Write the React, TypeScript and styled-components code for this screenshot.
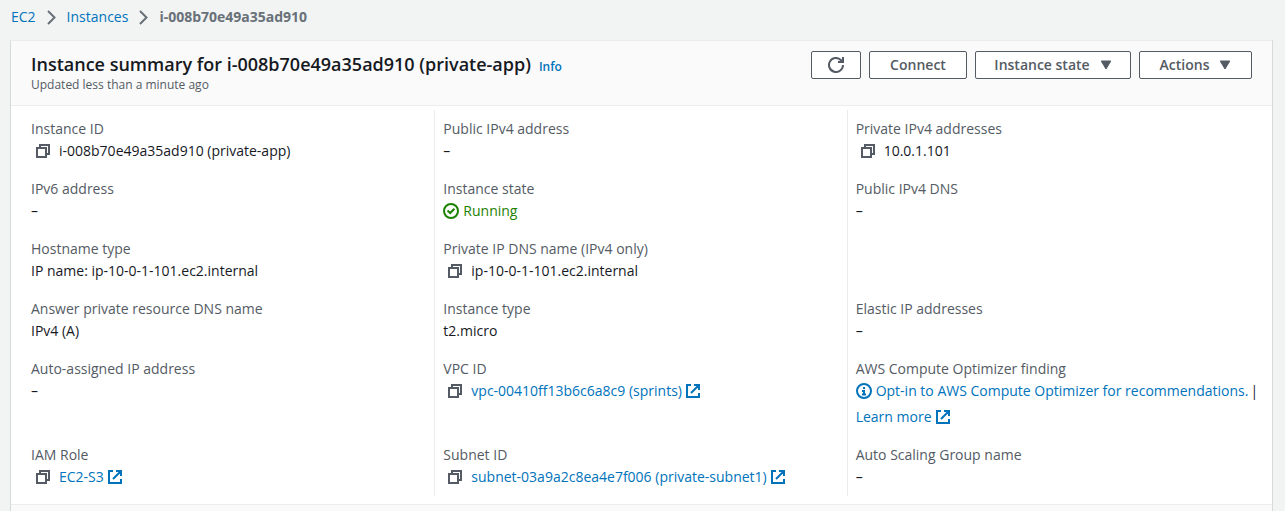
import React from "react";
import styled, { createGlobalStyle } from "styled-components";

const colors = {
  page: "#f2f3f3",
  header: "#fafafa",
  line: "#eaeded",
  text: "#16191f",
  muted: "#545b64",
  faded: "#687078",
  link: "#0073bb",
  ok: "#1d8102",
};

const GlobalStyle = createGlobalStyle`
  * { box-sizing: border-box; }
  body {
    margin: 0;
    background: ${colors.page};
    color: ${colors.text};
    font: 14px/22px "Open Sans", "Noto Sans", sans-serif;
  }
`;

const Page = styled.div`
  display: flex;
  flex-direction: column;
  min-height: 100vh;
  padding: 6px 12px 0 10px;
`;

const Crumbs = styled.ol`
  display: flex;
  align-items: center;
  gap: 11px;
  height: 22px;
  margin: 0 0 12px;
  padding: 0 0 0 1px;
  list-style: none;
`;

const Crumb = styled.li<{ $current?: boolean }>`
  display: flex;
  align-items: center;
  gap: 11px;
  color: ${colors.faded};
  font-weight: ${(p) => (p.$current ? 700 : 400)};
`;

const Link = styled.a`
  color: ${colors.link};
  text-decoration: none;
  &:hover { text-decoration: underline; }
`;

const Card = styled.main`
  display: flex;
  flex-direction: column;
  flex: 1;
  background: #fff;
  border: 1px solid #d5dbdb;
  border-top-color: ${colors.line};
  border-bottom: 0;
`;

const CardHeader = styled.header`
  display: flex;
  justify-content: space-between;
  align-items: flex-start;
  padding: 10px 20px 12px;
  background: ${colors.header};
  border-bottom: 1px solid ${colors.line};
`;

const Heading = styled.div`
  display: flex;
  align-items: baseline;
  gap: 8px;
`;

const Title = styled.h1`
  margin: 0;
  font-size: 18px;
  line-height: 26px;
  font-weight: 600;
`;

const InfoLink = styled(Link)`
  font-size: 12px;
  line-height: 16px;
  font-weight: 600;
`;

const Updated = styled.p`
  margin: 0;
  color: ${colors.muted};
  font-size: 12px;
  line-height: 16px;
`;

const Actions = styled.div`
  display: flex;
  gap: 8px;
`;

const Button = styled.button<{ $width: number }>`
  display: flex;
  align-items: center;
  justify-content: center;
  gap: 10px;
  width: ${(p) => p.$width}px;
  height: 28px;
  padding: 0;
  border: 1px solid ${colors.muted};
  border-radius: 2px;
  background: #fff;
  color: ${colors.muted};
  font: inherit;
  font-weight: 600;
  white-space: nowrap;
  cursor: pointer;
`;

const Details = styled.dl`
  display: grid;
  grid-template-columns: repeat(3, minmax(0, 1fr));
  margin: 0;
  padding: 4px 13px 8px 11px;
`;

const Cell = styled.div<{ $first?: boolean }>`
  padding: 8px 0 8px 8px;
  border-left: 1px solid ${(p) => (p.$first ? "transparent" : colors.line)};
`;

const Label = styled.dt`
  color: ${colors.muted};
`;

const Value = styled.dd`
  display: flex;
  flex-wrap: wrap;
  align-items: center;
  gap: 4px;
  margin: 0;
`;

const CopyButton = styled.button`
  display: flex;
  margin: 0 5px;
  padding: 0;
  border: 0;
  background: none;
  color: ${colors.muted};
  cursor: pointer;
`;

const Status = styled.span`
  display: flex;
  align-items: center;
  gap: 4px;
  color: ${colors.ok};
`;

const IconLink = styled(Link)`
  display: flex;
  align-items: center;
  gap: 4px;
`;

const OptIn = styled.span`
  display: flex;
  gap: 2px;
  white-space: nowrap;
`;

const Footer = styled.footer`
  flex: 1;
  background: ${colors.header};
  border-top: 1px solid ${colors.line};
`;

const ChevronIcon = () => (
  <svg width="9" height="15" viewBox="0 0 9 15" fill="none" stroke="#687078" strokeWidth="2" aria-hidden>
    <path d="M1 1l6.5 6.5L1 14" />
  </svg>
);

const RefreshIcon = () => (
  <svg width="16" height="16" viewBox="0 0 16 16" fill="none" stroke="currentColor" strokeWidth="2" aria-hidden>
    <path d="M15 8a7 7 0 1 1-2.2-5.1L15 5" />
    <path d="M10 5h5V0" />
  </svg>
);

const CaretIcon = () => (
  <svg width="12" height="10" viewBox="0 0 12 10" fill="currentColor" aria-hidden>
    <path d="M1.2 1h9.6L6 9z" stroke="currentColor" strokeLinejoin="round" />
  </svg>
);

const CopyIcon = () => (
  <svg width="14" height="14" viewBox="0 0 14 14" fill="none" stroke="currentColor" strokeWidth="2" aria-hidden>
    <path d="M1 4h9v9H1zM4 4V1h9v9h-3" />
  </svg>
);

const ExternalIcon = () => (
  <svg width="14" height="14" viewBox="0 0 14 14" fill="none" stroke="currentColor" strokeWidth="2" aria-hidden>
    <path d="M5 1H1v12h12V9M8 1h5v5M13 1L5 9" />
  </svg>
);

const CheckIcon = () => (
  <svg width="16" height="16" viewBox="0 0 16 16" fill="none" stroke="currentColor" strokeWidth="2" aria-hidden>
    <circle cx="8" cy="8" r="7" />
    <path d="M4.5 7.5L7.2 10l4.2-4.2" />
  </svg>
);

const InfoIcon = () => (
  <svg width="16" height="16" viewBox="0 0 16 16" fill="none" stroke="currentColor" strokeWidth="2" aria-hidden>
    <circle cx="8" cy="8" r="7" />
    <path d="M8 4v2M6 8h2v3M6 11.5h4" />
  </svg>
);

const Copyable = ({ name, children }: { name: string; children: React.ReactNode }) => (
  <>
    <CopyButton type="button" aria-label={`Copy ${name}`}>
      <CopyIcon />
    </CopyButton>
    {children}
  </>
);

const External = ({ children }: { children: React.ReactNode }) => (
  <IconLink href="#">
    {children}
    <ExternalIcon />
  </IconLink>
);

type Field = { label: string; value: React.ReactNode } | null;

const fields: Field[] = [
  { label: "Instance ID", value: <Copyable name="instance ID">i-008b70e49a35ad910 (private-app)</Copyable> },
  { label: "Public IPv4 address", value: "–" },
  { label: "Private IPv4 addresses", value: <Copyable name="private IPv4 address">10.0.1.101</Copyable> },
  { label: "IPv6 address", value: "–" },
  { label: "Instance state", value: <Status><CheckIcon />Running</Status> },
  { label: "Public IPv4 DNS", value: "–" },
  { label: "Hostname type", value: "IP name: ip-10-0-1-101.ec2.internal" },
  {
    label: "Private IP DNS name (IPv4 only)",
    value: <Copyable name="private DNS name">ip-10-0-1-101.ec2.internal</Copyable>,
  },
  null,
  { label: "Answer private resource DNS name", value: "IPv4 (A)" },
  { label: "Instance type", value: "t2.micro" },
  { label: "Elastic IP addresses", value: "–" },
  { label: "Auto-assigned IP address", value: "–" },
  { label: "VPC ID", value: <Copyable name="VPC ID"><External>vpc-00410ff13b6c6a8c9 (sprints)</External></Copyable> },
  {
    label: "AWS Compute Optimizer finding",
    value: (
      <>
        <OptIn>
          <IconLink href="#"><InfoIcon />Opt-in to AWS Compute Optimizer for recommendations.</IconLink>
          |
        </OptIn>
        <External>Learn more</External>
      </>
    ),
  },
  { label: "IAM Role", value: <Copyable name="IAM role"><External>EC2-S3</External></Copyable> },
  {
    label: "Subnet ID",
    value: <Copyable name="subnet ID"><External>subnet-03a9a2c8ea4e7f006 (private-subnet1)</External></Copyable>,
  },
  { label: "Auto Scaling Group name", value: "–" },
];

export default function App() {
  return (
    <>
      <GlobalStyle />
      <Page>
        <nav aria-label="Breadcrumb">
          <Crumbs>
            <Crumb><Link href="#">EC2</Link><ChevronIcon /></Crumb>
            <Crumb><Link href="#">Instances</Link><ChevronIcon /></Crumb>
            <Crumb $current>i-008b70e49a35ad910</Crumb>
          </Crumbs>
        </nav>
        <Card>
          <CardHeader>
            <div>
              <Heading>
                <Title>Instance summary for i-008b70e49a35ad910 (private-app)</Title>
                <InfoLink href="#">Info</InfoLink>
              </Heading>
              <Updated>Updated less than a minute ago</Updated>
            </div>
            <Actions>
              <Button type="button" $width={50} aria-label="Refresh"><RefreshIcon /></Button>
              <Button type="button" $width={98}>Connect</Button>
              <Button type="button" $width={156}>Instance state<CaretIcon /></Button>
              <Button type="button" $width={113}>Actions<CaretIcon /></Button>
            </Actions>
          </CardHeader>
          <Details>
            {fields.map((field, i) => (
              <Cell key={i} $first={i % 3 === 0}>
                {field && (
                  <>
                    <Label>{field.label}</Label>
                    <Value>{field.value}</Value>
                  </>
                )}
              </Cell>
            ))}
          </Details>
          <Footer />
        </Card>
      </Page>
    </>
  );
}
